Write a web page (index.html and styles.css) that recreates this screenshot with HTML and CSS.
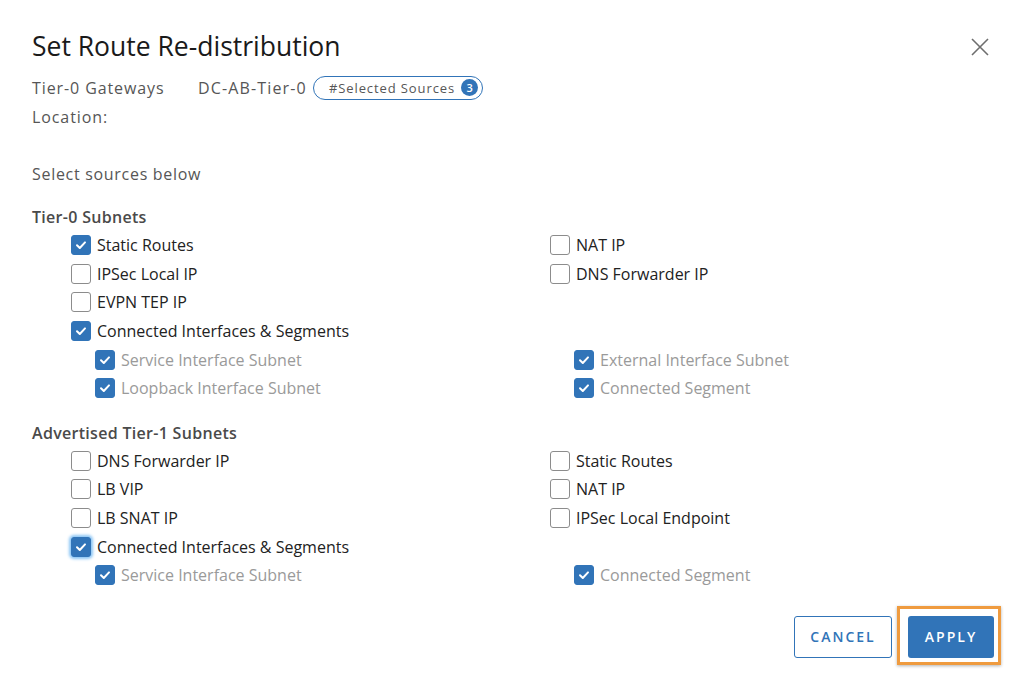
FILE: index.html
```html
<!DOCTYPE html>
<html lang="en">
<head>
  <meta charset="UTF-8" />
  <title>Set Route Re-distribution</title>
  <link rel="stylesheet" href="styles.css">
</head>
<body>
  <div class="modal">
    <header class="modal-header">
      <h1>Set Route Re-distribution</h1>
      <span class="close-btn">
        <svg width="20" height="20" viewBox="0 0 20 20"><path d="M2 2 L18 18 M18 2 L2 18" stroke="#6e6e6e" stroke-width="1.6" fill="none"/></svg>
      </span>
    </header>

    <div class="info-row">
      <span class="info-label">Tier-0 Gateways</span>
      <span class="info-value">DC-AB-Tier-0</span>
      <span class="badge">#Selected Sources <span class="badge-count">3</span></span>
    </div>
    <div class="info-row">
      <span class="info-label">Location:</span>
    </div>

    <p class="hint">Select sources below</p>

    <div class="section">
      <div class="section-title">Tier-0 Subnets</div>
      <div class="grid">
        <label class="opt checked">Static Routes</label>
        <label class="opt">NAT IP</label>
        <label class="opt">IPSec Local IP</label>
        <label class="opt">DNS Forwarder IP</label>
        <label class="opt">EVPN TEP IP</label>
        <span></span>
        <label class="opt checked">Connected Interfaces &amp; Segments</label>
        <span></span>
        <label class="opt checked sub">Service Interface Subnet</label>
        <label class="opt checked sub">External Interface Subnet</label>
        <label class="opt checked sub">Loopback Interface Subnet</label>
        <label class="opt checked sub">Connected Segment</label>
      </div>
    </div>

    <div class="section">
      <div class="section-title">Advertised Tier-1 Subnets</div>
      <div class="grid">
        <label class="opt">DNS Forwarder IP</label>
        <label class="opt">Static Routes</label>
        <label class="opt">LB VIP</label>
        <label class="opt">NAT IP</label>
        <label class="opt">LB SNAT IP</label>
        <label class="opt">IPSec Local Endpoint</label>
        <label class="opt checked focus">Connected Interfaces &amp; Segments</label>
        <span></span>
        <label class="opt checked sub">Service Interface Subnet</label>
        <label class="opt checked sub">Connected Segment</label>
      </div>
    </div>

    <footer class="modal-footer">
      <button class="btn btn-outline">CANCEL</button>
      <span class="highlight"><button class="btn btn-primary">APPLY</button></span>
    </footer>
  </div>
</body>
</html>
```

FILE: styles.css
```css
* {
  box-sizing: border-box;
}

body {
  margin: 0;
  background: #fff;
  font-family: "Open Sans", "Liberation Sans", sans-serif;
  color: #333;
}

.modal {
  width: 1024px;
  height: 687px;
  padding: 26px 23px 0 32px;
}

.modal-header {
  display: flex;
  justify-content: space-between;
  align-items: center;
  height: 40px;
}

.modal-header h1 {
  margin: 0;
  font-size: 26.5px;
  font-weight: 400;
  color: #1a1a1a;
}

.close-btn {
  display: flex;
  margin: 2px 11px 0 0;
}

.info-row {
  display: flex;
  align-items: center;
  height: 29px;
  font-size: 16px;
  letter-spacing: 0.9px;
  color: #565656;
}

.info-row:first-of-type {
  margin-top: 7px;
}

.info-label {
  width: 166px;
}

.info-value {
  margin-right: 6px;
  letter-spacing: 1.15px;
}

.badge {
  display: inline-flex;
  align-items: center;
  height: 24px;
  padding: 0 4px 0 15px;
  border: 1px solid #3174b8;
  border-radius: 12px;
  font-size: 13px;
  letter-spacing: 0.9px;
  color: #565656;
}

.badge-count {
  display: inline-flex;
  justify-content: center;
  align-items: center;
  width: 17px;
  height: 17px;
  margin-left: 6px;
  border-radius: 50%;
  background: #3174b8;
  color: #fff;
  font-size: 11px;
  font-weight: 600;
  letter-spacing: 0;
}

.hint {
  margin: 32px 0 0;
  height: 30px;
  font-size: 16px;
  letter-spacing: 0.7px;
  color: #565656;
}

.section {
  margin-top: 13px;
}

.section + .section {
  margin-top: 19px;
}

.section-title {
  height: 25px;
  font-size: 16px;
  font-weight: 600;
  letter-spacing: 0.3px;
  color: #4a4a4a;
}

.grid {
  display: grid;
  grid-template-columns: 479px 1fr;
  padding-left: 39px;
}

.opt {
  display: flex;
  align-items: center;
  height: 28.6px;
  font-size: 16px;
  color: #222;
}

.opt::before {
  content: "";
  width: 18px;
  height: 18px;
  margin-right: 6px;
  border: 1px solid #8c8c8c;
  border-radius: 3px;
  background: #fff;
  flex-shrink: 0;
}

.opt.checked::before {
  border-color: #3174b8;
  background: #3174b8 url("data:image/svg+xml,%3Csvg xmlns='http://www.w3.org/2000/svg' width='18' height='18'%3E%3Cpath d='M5 9.2 L7.8 12 L13 6.4' stroke='white' stroke-width='2' fill='none' stroke-linecap='round' stroke-linejoin='round'/%3E%3C/svg%3E") center no-repeat;
}

.opt.focus::before {
  box-shadow: 0 0 3px 2px #8cc6f5;
}

.opt.sub {
  padding-left: 24px;
  color: #9a9a9a;
}

.modal-footer {
  display: flex;
  justify-content: flex-end;
  align-items: center;
  margin-top: 16px;
}

.btn {
  height: 42px;
  border-radius: 3px;
  font-family: inherit;
  font-size: 14px;
  font-weight: 600;
  letter-spacing: 2px;
}

.btn-outline {
  width: 98px;
  border: 1px solid #3174b8;
  background: #fff;
  color: #3174b8;
  margin-top: 3px;
}

.highlight {
  margin-left: 5px;
  padding: 7px 4px 4px 8px;
  border: 3px solid #ef9b3f;
  box-shadow: 0 1px 3px rgba(0, 0, 0, 0.3);
}

.btn-primary {
  display: block;
  width: 86px;
  border: none;
  background: #3174b8;
  color: #fff;
}
```
